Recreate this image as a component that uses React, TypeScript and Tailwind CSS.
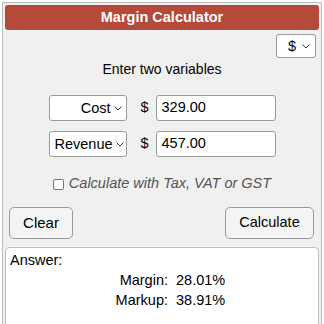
import React from "react";

function Chevron() {
  return (
    <svg width="8" height="5" viewBox="0 0 8 5" className="shrink-0">
      <path d="M0.5 0.5 L4 4 L7.5 0.5" fill="none" stroke="#333" strokeWidth="1" />
    </svg>
  );
}

function Select({ label, width, align }: { label: string; width: string; align: "right" | "left" }) {
  return (
    <div
      className={`${width} h-[26px] flex items-center gap-[3px] rounded-[3px] border border-[#9a9a9a] bg-white pl-[5px] pr-[4px] ${
        align === "right" ? "justify-end" : "justify-between"
      }`}
    >
      <span className="text-[14.5px] leading-none text-black">{label}</span>
      <Chevron />
    </div>
  );
}

function AmountRow({ sel, value, align }: { sel: string; value: string; align: "right" | "left" }) {
  return (
    <div className="flex items-center">
      <Select label={sel} width="w-[78px]" align={align} />
      <span className="ml-[14px] w-[15px] text-[14.5px] text-black">$</span>
      <div className="h-[26px] w-[120px] rounded-[3px] border border-[#9a9a9a] bg-white flex items-center pl-[5px] text-[14.5px] text-black">
        {value}
      </div>
    </div>
  );
}

export default function App() {
  return (
    <div className="w-[324px] h-[324px] overflow-hidden bg-white pl-[2px] pt-[2px] font-['Liberation_Sans',Arial,sans-serif]">
      <div className="w-[320px] h-[340px] border border-[#bdbdbd] bg-[#f0f0f0] px-[2px] pt-[2px]">
        <div className="h-[25px] rounded-[3px] bg-[#b5493a] flex items-center justify-center text-white font-bold text-[14.5px]">
          Margin Calculator
        </div>

        <div className="mt-[4px] flex justify-end pr-[3px]">
          <div className="w-[40px] h-[24px] rounded-[3px] border border-[#9a9a9a] bg-white flex items-center justify-between pl-[11px] pr-[5px]">
            <span className="text-[14.5px] leading-none text-black">$</span>
            <Chevron />
          </div>
        </div>

        <div className="mt-[2px] text-center text-[14px] leading-[18px] text-black">Enter two variables</div>

        <div className="mt-[17px] flex flex-col items-center gap-[10px]">
          <AmountRow sel="Cost" value="329.00" align="right" />
          <AmountRow sel="Revenue" value="457.00" align="left" />
        </div>

        <div className="mt-[18px] flex items-center justify-center gap-[5px] h-[18px]">
          <div className="w-[11px] h-[11px] rounded-[2px] border border-[#767676] bg-white" />
          <span className="text-[14.5px] italic text-[#555]">Calculate with Tax, VAT or GST</span>
        </div>

        <div className="mt-[14px] flex justify-between px-[4px] pr-[5px]">
          <button className="w-[64px] h-[32px] rounded-[5px] border border-[#9a9a9a] bg-[#f4f4f4] text-[15px] text-black">
            Clear
          </button>
          <button className="w-[89px] h-[32px] rounded-[5px] border border-[#9a9a9a] bg-[#f4f4f4] text-[14.5px] text-black">
            Calculate
          </button>
        </div>

        <div className="mt-[8px] h-[100px] rounded-t-[4px] border border-[#bdbdbd] bg-white pt-[3px] pl-[4px] text-[14.5px] leading-[18px] text-black">
          <div>Answer:</div>
          <div className="mt-[2px] flex">
            <span className="w-[158px] text-right">Margin:</span>
            <span className="ml-[8px]">28.01%</span>
          </div>
          <div className="mt-[2px] flex">
            <span className="w-[158px] text-right">Markup:</span>
            <span className="ml-[8px]">38.91%</span>
          </div>
        </div>
      </div>
    </div>
  );
}
